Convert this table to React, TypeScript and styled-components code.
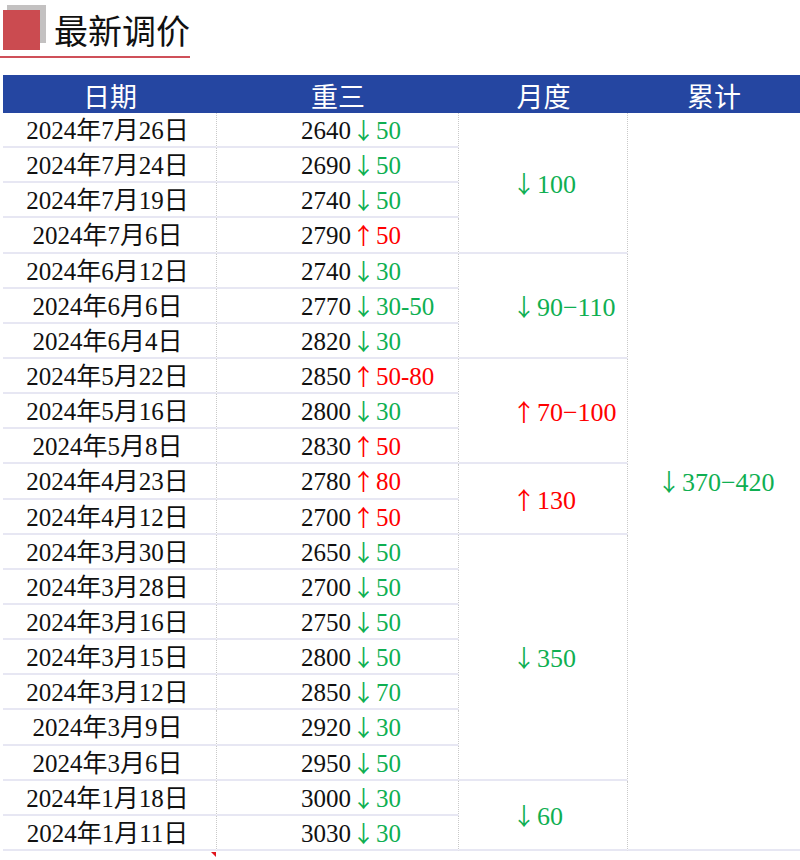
import React from 'react';
import styled, { createGlobalStyle } from 'styled-components';

type Dir = 'up' | 'down';

interface Row {
  date: string;
  price: number;
  dir: Dir;
  change: string;
}

interface Month {
  start: number;
  span: number;
  dir: Dir;
  value: string;
}

const rows: Row[] = [
  { date: '2024年7月26日', price: 2640, dir: 'down', change: '50' },
  { date: '2024年7月24日', price: 2690, dir: 'down', change: '50' },
  { date: '2024年7月19日', price: 2740, dir: 'down', change: '50' },
  { date: '2024年7月6日', price: 2790, dir: 'up', change: '50' },
  { date: '2024年6月12日', price: 2740, dir: 'down', change: '30' },
  { date: '2024年6月6日', price: 2770, dir: 'down', change: '30-50' },
  { date: '2024年6月4日', price: 2820, dir: 'down', change: '30' },
  { date: '2024年5月22日', price: 2850, dir: 'up', change: '50-80' },
  { date: '2024年5月16日', price: 2800, dir: 'down', change: '30' },
  { date: '2024年5月8日', price: 2830, dir: 'up', change: '50' },
  { date: '2024年4月23日', price: 2780, dir: 'up', change: '80' },
  { date: '2024年4月12日', price: 2700, dir: 'up', change: '50' },
  { date: '2024年3月30日', price: 2650, dir: 'down', change: '50' },
  { date: '2024年3月28日', price: 2700, dir: 'down', change: '50' },
  { date: '2024年3月16日', price: 2750, dir: 'down', change: '50' },
  { date: '2024年3月15日', price: 2800, dir: 'down', change: '50' },
  { date: '2024年3月12日', price: 2850, dir: 'down', change: '70' },
  { date: '2024年3月9日', price: 2920, dir: 'down', change: '30' },
  { date: '2024年3月6日', price: 2950, dir: 'down', change: '50' },
  { date: '2024年1月18日', price: 3000, dir: 'down', change: '30' },
  { date: '2024年1月11日', price: 3030, dir: 'down', change: '30' },
];

const months: Month[] = [
  { start: 1, span: 4, dir: 'down', value: '100' },
  { start: 5, span: 3, dir: 'down', value: '90−110' },
  { start: 8, span: 3, dir: 'up', value: '70−100' },
  { start: 11, span: 2, dir: 'up', value: '130' },
  { start: 13, span: 7, dir: 'down', value: '350' },
  { start: 20, span: 2, dir: 'down', value: '60' },
];

const App = () => {
  return (
    <>
      <GlobalStyle />
      <Page>
        <TitleWrap>
          <svg width="48" height="52" viewBox="0 0 48 52">
            <rect x="7" y="5" width="39" height="38" fill="#c3c1c1" />
            <rect x="3" y="10" width="37" height="40" fill="#cb4b50" />
          </svg>
          <Title>最新调价</Title>
        </TitleWrap>

        <Header>
          <HeadCell>日期</HeadCell>
          <HeadCell>重三</HeadCell>
          <HeadCell>月度</HeadCell>
          <HeadCell>累计</HeadCell>
        </Header>

        <Body>
          {rows.map((r, i) => (
            <React.Fragment key={r.date}>
              <DateCell style={{ gridRow: i + 1 }}>{r.date}</DateCell>
              <PriceCell style={{ gridRow: i + 1 }}>
                {r.price}
                <Change $dir={r.dir}>
                  <Arrow>{r.dir === 'up' ? '↑' : '↓'}</Arrow>
                  {r.change}
                </Change>
              </PriceCell>
            </React.Fragment>
          ))}
          {months.map(m => (
            <MonthCell key={m.start} style={{ gridRow: `${m.start} / span ${m.span}` }}>
              <Change $dir={m.dir}>
                <Arrow>{m.dir === 'up' ? '↑' : '↓'}</Arrow>
                {m.value}
              </Change>
            </MonthCell>
          ))}
          <TotalCell>
            <Change $dir="down">
              <Arrow>↓</Arrow>370−420
            </Change>
          </TotalCell>
          <Marker />
        </Body>
      </Page>
    </>
  );
};

export default App;

const GlobalStyle = createGlobalStyle`
  body {
    margin: 0;
    background: #fff;
    font-family: 'Liberation Serif', 'Noto Sans CJK SC', serif;
  }
`;

const Page = styled.div`
  width: 800px;
  height: 860px;
  overflow: hidden;
`;

const TitleWrap = styled.div`
  display: flex;
  align-items: flex-start;
  width: 190px;
  height: 56px;
  border-bottom: 2px solid #cf5059;
  svg {
    flex-shrink: 0;
  }
`;

const Title = styled.div`
  margin: 8px 0 0 6px;
  font-family: 'Noto Sans CJK SC', sans-serif;
  font-size: 34px;
  font-weight: 400;
  line-height: 44px;
  color: #111;
`;

const Header = styled.div`
  display: grid;
  grid-template-columns: 214px 242px 169px 1fr;
  height: 38px;
  margin: 17px 0 0 3px;
  background: #2546a1;
`;

const HeadCell = styled.div`
  display: flex;
  align-items: center;
  justify-content: center;
  font-family: 'Noto Sans CJK SC', sans-serif;
  font-size: 27px;
  color: #fff;
  line-height: 1;
  padding-top: 2px;
`;

const Body = styled.div`
  position: relative;
  display: grid;
  grid-template-columns: 214px 242px 169px 1fr;
  grid-template-rows: repeat(21, 35.15px);
  margin-left: 3px;
  font-size: 25px;
  color: #111;
`;

const Cell = styled.div`
  display: flex;
  align-items: center;
  box-sizing: border-box;
  border-bottom: 2px solid #e7e7f3;
  border-right: 1px dotted #c9c9c9;
  white-space: nowrap;
  line-height: 1;
`;

const DateCell = styled(Cell)`
  grid-column: 1;
  justify-content: center;
  padding: 2px 4px 0 0;
`;

const PriceCell = styled(Cell)`
  grid-column: 2;
  padding: 2px 0 0 84px;
`;

const MonthCell = styled(Cell)`
  grid-column: 3;
  padding: 4px 0 0 52px;
  font-size: 26px;
`;

const TotalCell = styled(Cell)`
  grid-column: 4;
  grid-row: 1 / span 21;
  padding: 4px 0 0 28px;
  border-right: none;
  font-size: 26px;
`;

const Change = styled.span<{ $dir: Dir }>`
  color: ${p => (p.$dir === 'up' ? '#f00' : '#0faf52')};
`;

const Arrow = styled.span`
  display: inline-block;
  font-family: 'Noto Sans CJK SC', sans-serif;
  font-size: 0.92em;
  margin: 0 1px;
`;

const Marker = styled.div`
  position: absolute;
  left: 208px;
  bottom: -6px;
  width: 0;
  height: 0;
  border-top: 5px solid #e0151d;
  border-left: 5px solid transparent;
`;
